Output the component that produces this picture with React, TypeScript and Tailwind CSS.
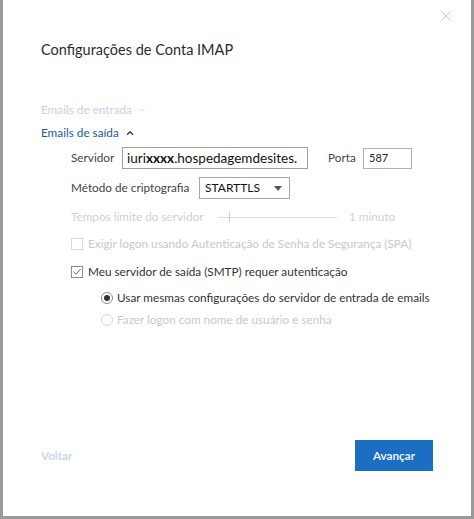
import { Check, ChevronDown, ChevronUp, X } from 'lucide-react';

const font = { fontFamily: 'Lato, "Open Sans", sans-serif' };

export default function App() {
  return (
    <div
      className="relative flex h-[519px] w-[474px] flex-col whitespace-nowrap border-x-[3px] border-b-[3px] border-[#9a9a9a] bg-white text-[#333]"
      style={font}
    >
      <button className="absolute right-[17px] top-[8px] text-[#b5b5b5]">
        <X className="h-[16px] w-[16px]" strokeWidth={1.2} />
      </button>

      <h1 className="ml-[38px] mt-[38px] text-[14.5px] leading-[24px] text-[#2b2b2b]">
        Configurações de Conta IMAP
      </h1>

      <div className="ml-[38px] mt-[39px] flex items-center gap-[5px] text-[11.75px] leading-[18px] text-[#c3d3e3]">
        Emails de entrada
        <ChevronDown className="h-[10px] w-[10px]" strokeWidth={2} />
      </div>
      <div className="ml-[38px] mt-[5px] flex items-center gap-[6px] text-[11.75px] leading-[18px] text-[#1c5a9a]">
        Emails de saída
        <ChevronUp className="h-[10px] w-[10px] text-[#333]" strokeWidth={3} />
      </div>

      <div className="ml-[68px] mt-[5px] flex flex-col text-[11.75px] text-[#444]">
        <div className="flex h-[22px] items-center">
          <span className="w-[51px]">Servidor</span>
          <div className="flex h-[22px] w-[186px] items-center overflow-hidden border border-[#9e9e9e] px-[4px] text-[13.5px] text-[#111]">
            iuri<b>xxxx</b>.hospedagemdesites.
          </div>
          <span className="ml-[20px] w-[35px]">Porta</span>
          <div className="flex h-[21px] w-[49px] items-center border border-[#b0b0b0] px-[5px] text-[11px] text-[#222]">
            587
          </div>
        </div>

        <div className="mt-[8px] flex h-[22px] items-center">
          <span className="w-[128px]">Método de criptografia</span>
          <div className="flex h-[22px] w-[91px] items-center justify-between border border-[#a8a8a8] pl-[5px] pr-[7px] text-[12px] text-[#111]">
            STARTTLS
            <span className="h-0 w-0 border-x-[4px] border-t-[5px] border-x-transparent border-t-[#555]" />
          </div>
        </div>

        <div className="mt-[7px] flex h-[22px] items-center text-[#d0d0d0]">
          <span className="w-[147px]">Tempos limite do servidor</span>
          <div className="relative flex h-[10px] w-[119px] items-center">
            <div className="h-px w-full bg-[#dcdcdc]" />
            <div className="absolute left-[11px] top-0 h-[10px] w-px bg-[#c8c8c8]" />
          </div>
          <span className="ml-[12px]">1 minuto</span>
        </div>

        <div className="mt-[5px] flex h-[22px] items-center gap-[5px] text-[#c8c8c8]">
          <span className="h-[12px] w-[12px] border border-[#d6d6d6]" />
          Exigir logon usando Autenticação de Senha de Segurança (SPA)
        </div>

        <div className="mt-[6px] flex h-[22px] items-center gap-[5px] text-[#333]">
          <span className="flex h-[12px] w-[12px] items-center justify-center border border-[#8a8a8a]">
            <Check className="h-[10px] w-[10px] text-[#333]" strokeWidth={2} />
          </span>
          Meu servidor de saída (SMTP) requer autenticação
        </div>

        <div className="ml-[30px] mt-[4px] flex h-[22px] items-center gap-[4px] text-[#333]">
          <span className="flex h-[12px] w-[12px] items-center justify-center rounded-full border border-[#8a8a8a]">
            <span className="h-[6px] w-[6px] rounded-full bg-[#333]" />
          </span>
          Usar mesmas configurações do servidor de entrada de emails
        </div>

        <div className="ml-[30px] mt-0 flex h-[22px] items-center gap-[4px] text-[#c8c8c8]">
          <span className="h-[12px] w-[12px] rounded-full border border-[#d6d6d6]" />
          Fazer logon com nome de usuário e senha
        </div>
      </div>

      <div className="mt-auto mb-[45px] flex items-center justify-between pl-[38px] pr-[38px]">
        <span className="text-[11.75px] font-semibold text-[#c3d5e8]">Voltar</span>
        <button className="h-[31px] w-[78px] bg-[#1b6ec2] text-[11.75px] font-semibold text-white">Avançar</button>
      </div>
    </div>
  );
}
